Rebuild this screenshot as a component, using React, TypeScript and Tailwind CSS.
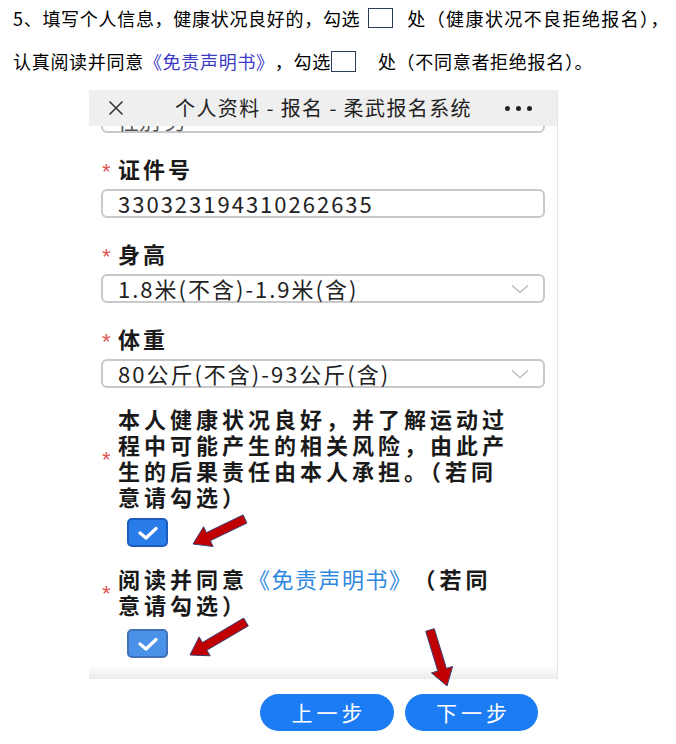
import React from "react";

const arrows = [
  { tx: 245, ty: 519, px: 193, py: 544 },
  { tx: 246, ty: 622, px: 190, py: 655 },
  { tx: 430, ty: 630, px: 447, py: 686 },
];

function arrowPoints(tx: number, ty: number, px: number, py: number) {
  const w = 4.5;
  const h = 11;
  const len = 17;
  const dx = px - tx;
  const dy = py - ty;
  const d = Math.hypot(dx, dy);
  const ux = dx / d;
  const uy = dy / d;
  const nx = -uy;
  const ny = ux;
  const bx = px - ux * len;
  const by = py - uy * len;
  const pts = [
    [tx + nx * w, ty + ny * w],
    [bx + nx * w, by + ny * w],
    [bx + nx * h, by + ny * h],
    [px, py],
    [bx - nx * h, by - ny * h],
    [bx - nx * w, by - ny * w],
    [tx - nx * w, ty - ny * w],
  ];
  return pts.map((p) => p.map((v) => v.toFixed(1)).join(",")).join(" ");
}

function Star() {
  return (
    <span className="w-[17px] shrink-0 pl-[1px] pt-[6px] font-['Liberation_Sans',sans-serif] text-[22px] leading-none text-[#e25252]">
      *
    </span>
  );
}

function Label({ text }: { text: string }) {
  return (
    <div className="mt-[22px] mb-[6px] flex h-[28px] items-center">
      <Star />
      <span className="-mt-[2px] text-[22px] font-bold tracking-[3px] text-[#1a1a1a]">{text}</span>
    </div>
  );
}

function Chevron() {
  return (
    <svg width="18" height="10" viewBox="0 0 18 10" fill="none">
      <path d="M1 1.5 L9 8.5 L17 1.5" stroke="#b9b9b9" strokeWidth="1.3" />
    </svg>
  );
}

function Field({ value, select }: { value: string; select?: boolean }) {
  return (
    <div className="flex h-[29px] items-center justify-between rounded-[6px] border-2 border-[#c9c9c9] pl-[15px] pr-[14px] text-[22px] tracking-[2px] text-[#222]">
      <span>{value}</span>
      {select && <Chevron />}
    </div>
  );
}

function CheckBox({ light }: { light?: boolean }) {
  return (
    <div
      className={`ml-[26px] flex h-[29px] w-[41px] items-center justify-center rounded-[5px] border-2 ${
        light ? "bg-[#4a92e8] border-[#3f72b4]" : "bg-[#2a7ce8] border-[#1c5cbc]"
      }`}
    >
      <svg width="22" height="14" viewBox="0 0 22 14" fill="none">
        <path d="M3 7 L9 12 L19 2.5" stroke="white" strokeWidth="3.2" strokeLinecap="round" strokeLinejoin="round" />
      </svg>
    </div>
  );
}

export default function App() {
  return (
    <div className="relative h-[744px] w-[676px] overflow-hidden bg-white font-['Noto_Sans_CJK_SC','Noto_Sans',sans-serif]">
      {/* instructions */}
      <div className="pl-[13px] text-[18px] tracking-[0.7px] text-black">
        <div className="flex h-[36px] items-center">
          <span>5、填写个人信息，健康状况良好的，勾选</span>
          <span className="ml-[8px] h-[20px] w-[25px] border-[1.5px] border-[#2c3c5a]" />
          <span className="ml-[14px] tracking-[1.4px]">处（健康状况不良拒绝报名），</span>
        </div>
        <div className="mt-[7px] flex h-[36px] items-center">
          <span>认真阅读并同意</span>
          <span className="text-[#3b3bc4]">《免责声明书》</span>
          <span>，勾选</span>
          <span className="h-[21px] w-[25px] border-[1.5px] border-[#2c3c5a]" />
          <span className="ml-[22px]">处（不同意者拒绝报名）。</span>
        </div>
      </div>

      {/* phone screenshot */}
      <div className="ml-[89px] mt-[11px] w-[469px] border-r border-[#e4e4e4]">
        <div className="flex h-[36px] items-center bg-[#efefef] text-[#222]">
          <div className="w-[56px] pl-[19px]">
            <svg width="16" height="16" viewBox="0 0 16 16">
              <path d="M1.5 1.5 L14.5 14.5 M14.5 1.5 L1.5 14.5" stroke="#333" strokeWidth="1.5" />
            </svg>
          </div>
          <div className="flex-1 pl-[1px] text-center text-[20px] tracking-[1.4px]">个人资料 - 报名 - 柔武报名系统</div>
          <div className="flex w-[56px] justify-end gap-[6px] pr-[25px]">
            <span className="h-[5px] w-[5px] rounded-full bg-[#222]" />
            <span className="h-[5px] w-[5px] rounded-full bg-[#222]" />
            <span className="h-[5px] w-[5px] rounded-full bg-[#222]" />
          </div>
        </div>

        <div className="flex h-[553px] flex-col overflow-hidden bg-white px-[12px]">
          <div className="-mt-[23px] flex h-[30px] items-center rounded-[6px] border-2 border-[#c9c9c9] pl-[15px] pt-[6px] text-[21px] text-[#555]">
            <span>性别 男</span>
          </div>

          <Label text="证件号" />
          <Field value="330323194310262635" />

          <Label text="身高" />
          <Field value="1.8米(不含)-1.9米(含)" select />

          <Label text="体重" />
          <Field value="80公斤(不含)-93公斤(含)" select />

          <div className="mt-[17px] flex items-center">
            <Star />
            <div className="text-[22px] font-bold leading-[26px] tracking-[4px] text-[#1a1a1a]">
              <div>本人健康状况良好，并了解运动过</div>
              <div>程中可能产生的相关风险，由此产</div>
              <div>生的后果责任由本人承担。（若同</div>
              <div>意请勾选）</div>
            </div>
          </div>
          <div className="mt-[9px]">
            <CheckBox />
          </div>

          <div className="mt-[18px] flex items-center">
            <Star />
            <div className="text-[22px] font-bold leading-[26px] tracking-[4px] text-[#1a1a1a]">
              <div>
                阅读并同意
                <span className="font-normal tracking-[1.5px] text-[#2f88e0]">《免责声明书》</span>
                <span className="ml-[12px]">（若同</span>
              </div>
              <div>意请勾选）</div>
            </div>
          </div>
          <div className="mt-[12px]">
            <CheckBox light />
          </div>

          <div className="-mx-[12px] mt-auto h-[14px] bg-gradient-to-b from-white to-[#ebebeb]" />
        </div>
      </div>

      {/* step buttons */}
      <div className="mt-[15px] flex gap-[11px] pl-[260px]">
        <button className="flex h-[37px] w-[134px] items-center justify-center rounded-full bg-[#1c7cf3] pl-[4px] text-[21px] tracking-[4px] text-white">
          上一步
        </button>
        <button className="flex h-[37px] w-[133px] items-center justify-center rounded-full bg-[#1c7cf3] pl-[4px] text-[21px] tracking-[4px] text-white">
          下一步
        </button>
      </div>

      {/* red arrows */}
      <svg className="pointer-events-none absolute inset-0" width="676" height="744">
        {arrows.map((a, i) => (
          <polygon
            key={i}
            points={arrowPoints(a.tx, a.ty, a.px, a.py)}
            fill="#c00000"
            stroke="#3b3f78"
            strokeWidth="1"
            strokeLinejoin="miter"
          />
        ))}
      </svg>
    </div>
  );
}
